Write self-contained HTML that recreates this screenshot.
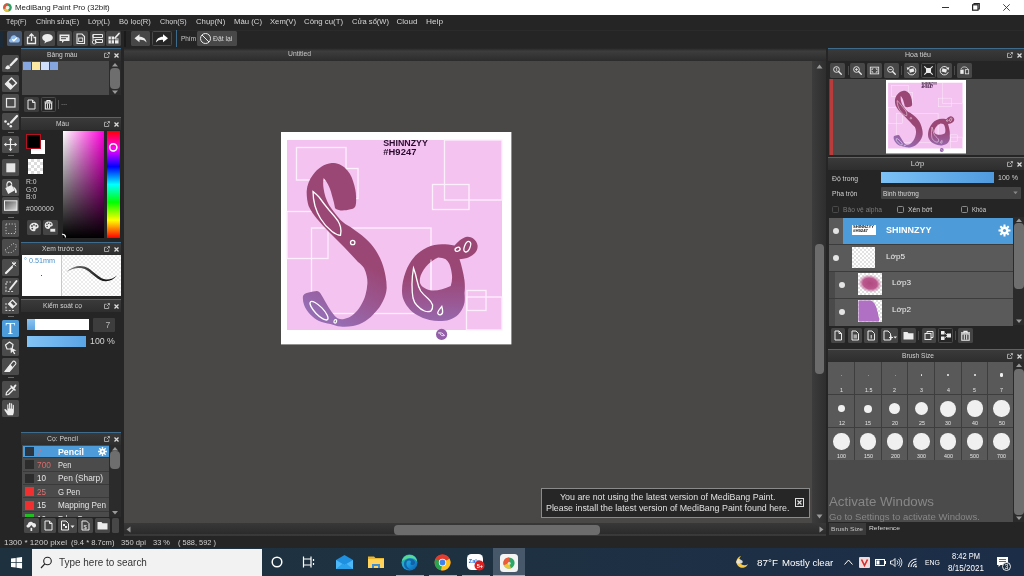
<!DOCTYPE html><html lang="vi"><head><meta charset="utf-8"><title>MediBang Paint Pro</title><style>
*{box-sizing:border-box;margin:0;padding:0}
html,body{width:1024px;height:576px;overflow:hidden;background:#4a4847;font-family:"Liberation Sans",sans-serif;}
#root{position:absolute;left:0;top:0;width:1024px;height:576px;overflow:hidden;will-change:transform}
.a{position:absolute}
.t{position:absolute;white-space:nowrap;line-height:1}
.hdr{position:absolute;height:13px;background:linear-gradient(#3b3a3a,#2e2e2e);border-top:1px solid #3f6c8c;color:#d8d8d8;font-size:8.5px;text-align:center;line-height:11px}
.btn{position:absolute;background:#4a4a4a;border-radius:1.5px}
.btnd{position:absolute;background:#262626;border:1px solid #4a4a4a;border-radius:1.5px}
.tool{position:absolute;left:2px;width:17px;height:17px;background:#4b4b4b;border-radius:1.5px}
svg{position:absolute;overflow:visible}
</style></head><body><div id="root">
<!-- sec_top -->
<div class="a" style="left:0;top:0;width:1024px;height:15px;background:#fff"></div>
<svg style="left:3px;top:3px" width="9" height="9" viewBox="0 0 9 9"><circle cx="4.500" cy="4.500" r="4.300" fill="#2e9e62"/><path d="M4.500 4.500L4.500 .200A4.300 4.300 0 0 0 .600 6.300Z" fill="#e8503a"/><path d="M4.500 4.500L.600 6.300A4.300 4.300 0 0 0 6 8.500Z" fill="#f0c030"/><circle cx="4.600" cy="4.600" r="1.900" fill="#fff" opacity=".85"/></svg>
<div class="t" style="left:15px;top:3.8px;font-size:7.9px;color:#1a1a1a;">MediBang Paint Pro (32bit)</div>
<div class="a" style="left:941.500px;top:7px;width:7px;height:1px;background:#333"></div>
<svg style="left:972px;top:3px" width="8" height="8" viewBox="0 0 8 8"><rect x=".600" y="1.800" width="5.400" height="5.400" fill="none" stroke="#222" stroke-width="1.200"/><path d="M2 1.800V.600H7.300V6H6" fill="none" stroke="#222" stroke-width="1.100"/></svg>
<svg style="left:1003px;top:4px" width="7" height="7" viewBox="0 0 7 7"><path d="M.300 .300L6.700 6.700M6.700 .300L.300 6.700" stroke="#333" stroke-width=".9"/></svg>
<div class="a" style="left:0;top:15px;width:1024px;height:33px;background:#252525"></div>
<div class="t" style="left:5.6px;top:18.3px;font-size:8px;color:#d6d6d6;transform:scaleX(0.850);transform-origin:0 0;">Tệp(F)</div>
<div class="t" style="left:35.6px;top:18.3px;font-size:8px;color:#d6d6d6;transform:scaleX(0.906);transform-origin:0 0;">Chỉnh sửa(E)</div>
<div class="t" style="left:87.5px;top:18.3px;font-size:8px;color:#d6d6d6;transform:scaleX(0.916);transform-origin:0 0;">Lớp(L)</div>
<div class="t" style="left:118.7px;top:18.3px;font-size:8px;color:#d6d6d6;transform:scaleX(0.954);transform-origin:0 0;">Bộ lọc(R)</div>
<div class="t" style="left:160px;top:18.3px;font-size:8px;color:#d6d6d6;transform:scaleX(0.896);transform-origin:0 0;">Chọn(S)</div>
<div class="t" style="left:195.7px;top:18.3px;font-size:8px;color:#d6d6d6;transform:scaleX(0.969);transform-origin:0 0;">Chụp(N)</div>
<div class="t" style="left:233.5px;top:18.3px;font-size:8px;color:#d6d6d6;transform:scaleX(0.969);transform-origin:0 0;">Màu (C)</div>
<div class="t" style="left:270px;top:18.3px;font-size:8px;color:#d6d6d6;transform:scaleX(0.959);transform-origin:0 0;">Xem(V)</div>
<div class="t" style="left:304px;top:18.3px;font-size:8px;color:#d6d6d6;transform:scaleX(0.975);transform-origin:0 0;">Công cụ(T)</div>
<div class="t" style="left:351.5px;top:18.3px;font-size:8px;color:#d6d6d6;transform:scaleX(0.946);transform-origin:0 0;">Cửa sổ(W)</div>
<div class="t" style="left:396.5px;top:18.3px;font-size:8px;color:#d6d6d6;">Cloud</div>
<div class="t" style="left:426px;top:18.3px;font-size:8px;color:#d6d6d6;transform:scaleX(1.033);transform-origin:0 0;">Help</div>
<div class="a" style="left:0;top:30px;width:1024px;height:1px;background:#2b2b2b"></div>
<div class="a" style="left:0;top:31px;width:3px;height:16px;background:#1c2a38"></div>
<div class="btn" style="left:7px;top:31px;width:15px;height:15px;background:#46566f"></div>
<div class="btn" style="left:24px;top:31px;width:15px;height:15px;background:#474747"></div>
<div class="btn" style="left:40px;top:31px;width:15px;height:15px;background:#474747"></div>
<div class="btn" style="left:57px;top:31px;width:15px;height:15px;background:#474747"></div>
<div class="btn" style="left:73px;top:31px;width:15px;height:15px;background:#474747"></div>
<div class="btn" style="left:90px;top:31px;width:15px;height:15px;background:#474747"></div>
<div class="btn" style="left:106px;top:31px;width:15px;height:15px;background:#474747"></div>
<svg style="left:7px;top:31px" width="15" height="15" viewBox="0 0 15 15"><path d="M4 11.500C1.800 11.500 1.200 8.300 3.500 7.700C3.500 4 8.300 3 9.700 6C12.800 5.300 14.300 10.500 11.300 11.500Z" fill="#8fbcec"/><path d="M5.300 8.300L6.800 9.800L9.800 6.800" fill="none" stroke="#fff" stroke-width="1.300"/></svg>
<svg style="left:24px;top:31px" width="15" height="15" viewBox="0 0 15 15"><path d="M5.500 6.500H3.500V12.500H11.500V6.500H9.500" fill="none" stroke="#ececec" stroke-width="1.300"/><path d="M7.500 10V3.500M5.300 5.300L7.500 3L9.700 5.300" fill="none" stroke="#ececec" stroke-width="1.300"/></svg>
<svg style="left:40px;top:31px" width="15" height="15" viewBox="0 0 15 15"><ellipse cx="7.500" cy="6.800" rx="5.300" ry="3.900" fill="#ececec"/><path d="M5 9.500L4.500 12.500L8 10Z" fill="#ececec"/></svg>
<svg style="left:57px;top:31px" width="15" height="15" viewBox="0 0 15 15"><path d="M2.500 3.500H12.500V10H7L5 12V10H2.500Z" fill="#ececec"/><path d="M4 5.700H11M4 7.700H9" stroke="#474747" stroke-width="1"/></svg>
<svg style="left:73px;top:31px" width="15" height="15" viewBox="0 0 15 15"><path d="M4 3H9L11.500 5.500V12.500H4Z" fill="none" stroke="#ececec" stroke-width="1.100"/><rect x="5.700" y="7" width="4" height="3.500" fill="none" stroke="#ececec" stroke-width=".9"/></svg>
<svg style="left:90px;top:31px" width="15" height="15" viewBox="0 0 15 15"><path d="M3 3.500H12.500V6.500H3ZM5.500 8.500H12.500V11.500H5.500ZM3 3.500V9" fill="none" stroke="#ececec" stroke-width="1"/><circle cx="4.300" cy="11" r="2" fill="none" stroke="#ececec" stroke-width=".9"/></svg>
<svg style="left:106px;top:31px" width="15" height="15" viewBox="0 0 15 15"><path d="M2.500 5.500H8V12.500H2.500Z" fill="#ececec"/><path d="M9 7.500H12.500V12.500H9Z" fill="#ececec"/><path d="M2.500 8.800H12.500M5.300 5.500V12.500" stroke="#474747" stroke-width=".8"/><path d="M13 2.500L9 7" stroke="#ececec" stroke-width="1.700" stroke-linecap="round"/></svg>
<div class="a" style="left:124px;top:31px;width:2px;height:16px;background:#1a1a1a"></div>
<div class="btn" style="left:131px;top:31px;width:19px;height:15px;background:#474747"></div>
<div class="btnd" style="left:152px;top:31px;width:20px;height:15px"></div>
<svg style="left:131px;top:31px" width="19" height="15" viewBox="0 0 19 15"><path d="M3.500 7.300L8.500 3.300V5.700C12.500 5.700 15.300 8 15.500 11.500C13.800 9.300 11.500 8.700 8.500 8.900V11.300Z" fill="#ececec"/></svg>
<svg style="left:152px;top:31px" width="20" height="15" viewBox="0 0 20 15"><path d="M16 7.300L11 3.300V5.700C7 5.700 4.200 8 4 11.500C5.700 9.300 8 8.700 11 8.900V11.300Z" fill="#fff"/></svg>
<div class="a" style="left:176px;top:30px;width:1px;height:17px;background:#3f6c8c"></div>
<div class="t" style="left:180.5px;top:35px;font-size:7px;color:#c8c8c8;transform:scaleX(0.918);transform-origin:0 0;">Phím</div>
<div class="btn" style="left:197px;top:31px;width:40px;height:15px;background:#484848"></div>
<svg style="left:199px;top:32px" width="13" height="13" viewBox="0 0 13 13"><circle cx="6.500" cy="6.500" r="5" fill="none" stroke="#ececec" stroke-width="1"/><path d="M3 3L10 10" stroke="#ececec" stroke-width="1"/></svg>
<div class="t" style="left:213px;top:35.5px;font-size:6.8px;color:#d8d8d8;">Đặt lại</div>
<div class="a" style="left:124px;top:48px;width:702px;height:13px;background:linear-gradient(#242424,#3d3d3d 25%,#2c2c2c)"></div>
<div class="t" style="left:288px;top:51px;font-size:6.6px;color:#c8c8c8;transform:scaleX(1.028);transform-origin:0 0;">Untitled</div>
<!-- sec_canvas -->
<div class="a" style="left:124px;top:61px;width:688px;height:462px;background:#4a4847"></div>
<svg style="left:0;top:0" width="1024" height="576" viewBox="0 0 1024 576"><defs><linearGradient id="ga" gradientUnits="userSpaceOnUse" x1="0" y1="278" x2="0" y2="326"><stop offset="0" stop-color="#9b4776"/><stop offset="0.45" stop-color="#9a5690"/><stop offset="1" stop-color="#966cb2"/></linearGradient><linearGradient id="sa" gradientUnits="userSpaceOnUse" x1="372" y1="268" x2="340" y2="324"><stop offset="0" stop-color="#9b4776"/><stop offset="0.5" stop-color="#9a5892"/><stop offset="1" stop-color="#966cb2"/></linearGradient></defs>
<rect x="281" y="132" width="230.4" height="212.4" fill="#fff"/>
<rect x="287" y="140" width="215" height="190" fill="#f4c2f0"/>
<g fill="#f9dcf8" fill-opacity=".06" stroke="#fdf0fd" stroke-width="1.3">
<rect x="296.5" y="147.5" width="49.5" height="32.5"/>
<rect x="346" y="168.5" width="12" height="30"/>
<rect x="287" y="211.5" width="41" height="47"/>
<rect x="311.5" y="228" width="119.5" height="85.5"/>
<rect x="444.5" y="140" width="57.5" height="60"/>
<rect x="432.5" y="184.5" width="36.5" height="25"/>
<rect x="467" y="290.5" width="19" height="20"/>
<rect x="466.5" y="297" width="35.5" height="33"/>
</g>
<path d="M331.7 163 C338 163 341.5 165 344.3 167.3 C349 171.5 351.5 176 353 181 C355 187 356 192 356 196 C356.3 200 356.3 203.5 355.5 206 C354.5 208.3 352.5 209 350.5 209.3 C347 210.3 343.5 210.6 340.5 210.4 C338 210 336 209.5 335 208 C334.3 204 333.5 200.5 332.4 197 C331.5 193.500 330.5 190 329.2 187 C327.800 183.500 326 180.500 323.6 178 C323 181.500 323 185 323.6 188.5 C324 191.500 324.6 194.300 325.5 197 C326.400 199.800 327.600 202.500 329 205 C330.500 207.500 332.200 209.800 334 212 C336 214.800 338.300 217.500 340.5 220 C343.500 223 347 225.300 350.5 227 C356 231 361 234.500 365.5 238.5 C369.500 242 372.800 246 375.5 250 C378 254 380.200 258 381.7 262 C383.500 266.500 384.700 271.300 385.5 276 C386.300 280 386.700 284 386.7 288 C386.500 292.500 385 297 383 301 C381 305 378.500 309 375.5 312 C372.500 315.500 369.200 318.700 365.5 321 C361.500 323.500 357.300 325.200 353 326 C349 326.800 344.500 327 340.5 326.6 C337 326.200 333.500 325.200 330.5 324 C326.500 323.300 322.500 322.500 319 321 C315.800 319.300 313 317.300 310.5 314.7 C307.700 311.800 305.300 308.500 304 304.7 C303 301.800 302.600 298.800 303 296 C303.800 294.300 305 293.500 306.7 293 C310 292 313.500 291.300 316.7 291 C318.300 291.300 319.600 292.200 320.5 293.5 C322.300 296.300 324 299.200 325.5 302 C327.500 305.500 329.500 309 331.7 312 C333.500 314.500 335.500 317 338 318.500 C340 319.300 342 319.500 344 319 C347.300 318.200 350.500 316.800 353 314.7 C356 312.200 358.500 309.300 360.5 306 C362.700 302.500 364.500 298.700 365.5 294.7 C366.500 291 367.200 287.300 367.4 283.5 C367.500 281 367.300 278.500 366.7 276 C366.200 273.200 365.300 270.500 364 268 C362.300 265.500 360.200 263.700 358 262 C353.500 257 348.700 252 344 247 C339 242 334 237 329 232 C324.500 227.500 320.500 223 316.7 218.5 C313.500 214.700 310.700 210.500 308.6 206 C307.200 201.200 306.500 196 306.7 191 C307 185.300 309.200 179.700 313 174.7 C317.500 168.500 324.500 163.500 331.7 163 Z" fill="url(#sa)"/>
<path d="M402 290.5 C402 284 403.500 277.500 405.7 271.7 C407.800 266 410.800 261 414.5 256.7 C418 252.700 422.300 249.500 427 247.400 C431.800 245.300 437 244.300 442 244.200 C446.300 244.200 450.500 244.700 454.5 245.500 C456 243.700 457.600 242 459.500 240.500 C461.700 238.700 464.300 237.300 467 236.700 C469.300 236.500 471.500 237.200 473.200 238.600 C475.500 240.300 477.200 242.700 477.600 245.500 C477.800 248.300 476.800 251 475 253 C472.800 255.300 470 257 467 258 C464.500 258.700 462 259.200 459.500 259.200 C460.500 262 461.300 265 462 268 C463 272 464 276.200 464.500 280.500 C465 285 465 289 464.500 293 C464.800 296.500 464.900 299.500 464.500 302.500 C463.800 306.300 462.300 309.700 460 312.500 C457.800 315.300 455.200 317.500 452 318.700 C448.800 320.200 445.400 320.900 442 321 C437.800 321.300 433.500 321 429.500 320 C425 319 420.800 317.300 417 315 C413.500 313 410.500 310.500 408.200 307.500 C406 304.800 404.300 301.800 403.200 298.700 C402.300 296 402 293.300 402 290.500 Z M438.200 257.400 C434.500 259 431.200 261.300 428.200 264.200 C425 267.300 422.300 271.200 420.700 275.500 C419.800 278 419.600 280.600 420 283 C420.800 285.200 422.300 287 424.500 288 C426.800 289.500 429.400 290.300 432 290.500 C435.300 290.700 438.700 290.200 442 289.200 C445 288.400 448 287.400 450.700 286 C451.800 282.600 452.300 279 452 275.500 C451.700 271.600 450.800 267.800 449.500 264.200 C448.600 262.300 447.300 260.600 445.700 259.200 C443.300 258.200 440.800 257.500 438.200 257.400 Z" fill="url(#ga)" fill-rule="evenodd"/>
<path d="M431 259.500V290" stroke="#fdeefd" stroke-width="1" fill="none" opacity=".9"/>
<g fill="none" stroke="#fff" stroke-width="1.3">
<path d="M313 191.600 C313 196.500 313.800 201.500 315 206 C316.300 210.500 318.300 214.800 320.500 218.500 C323.500 223.500 327.500 228 332 231.500 C335 233.800 338 235.200 340.500 235.400 C341.200 232.800 341.200 230 340.500 227 C339.900 224.700 339 222.700 338 221 C335.300 217.200 332.200 213.600 329 210 C325.500 205.800 322.200 201.500 319 197 C316.800 194.800 314.700 193 313 191.600 Z"/>
<circle cx="352.700" cy="242.500" r="2.200"/>
<ellipse cx="319" cy="310.700" rx="12.300" ry="4" transform="rotate(46 319 310.700)"/>
<ellipse cx="335.300" cy="321.300" rx="1.300" ry="1.800" transform="rotate(20 335.300 321.300)" stroke-width="1.2"/>
<path d="M413.500 268 C412.500 273.500 412 279 412 284.200 C412 289 412.300 294 413 298 C414 302 415.300 304 417 305.500 C419.300 308 421.800 310 424.500 311 C426.600 311.800 428.800 311.900 430.700 311.200 C432.300 309.500 432.900 307.300 432.600 305 C431.800 302.600 430.300 300.500 428.200 298.700 C425.500 296.400 422.800 294 420.700 291 C419 288 417.800 284.500 417 280.500 C416.200 276.200 415 272 413.500 268 Z"/>
<ellipse cx="467.300" cy="246.700" rx="2.800" ry="5.500" transform="rotate(22 467.300 246.700)"/>
<ellipse cx="457.600" cy="249.300" rx="2.600" ry="1.900" transform="rotate(-25 457.600 249.300)"/>
<path d="M441.800 306.500 C440.200 308.500 438.300 310.500 437.800 312.300 C437.600 314 438.800 315 440.300 314.800 C442 314.500 442.800 313 442.600 311 C442.500 309.500 442.200 308 441.800 306.500 Z"/>
</g>
<circle cx="441.600" cy="334.400" r="5.600" fill="#925fa8"/>
<path d="M438 333 C440.500 332.300 443 333 444.500 335.500 C442.500 336.300 440.500 335.300 439.800 333.200" fill="none" stroke="#fff" stroke-width=".8"/>
<text transform="translate(383.200 145.800) scale(.94 1)" font-family="'Liberation Sans',sans-serif" font-weight="bold" font-size="9.400" fill="#2a0b2e">SHINNZYY</text>
<text x="383.200" y="154.800" font-family="'Liberation Sans',sans-serif" font-weight="bold" font-size="9.400" fill="#2a0b2e" letter-spacing=".1">#H9247</text></svg>
<!-- sec_left -->
<div class="a" style="left:0;top:48px;width:21px;height:488px;background:#252525"></div>
<div class="tool" style="top:55px"></div>
<svg style="left:2px;top:55px" width="17" height="17" viewBox="0 0 17 17"><path d="M14.700 3.900L8.600 10.200" stroke="#ececec" stroke-width="2.300" stroke-linecap="round"/><path d="M3.300 13.800C3.300 12.200 4.500 10.300 6.300 10.300L8.300 12.300C8.300 14 6 14.800 3.300 13.800Z" fill="#ececec"/></svg>
<div class="tool" style="top:75px"></div>
<svg style="left:2px;top:75px" width="17" height="17" viewBox="0 0 17 17"><path d="M9.500 3L14.500 8L8.500 14L3.500 9Z" fill="none" stroke="#ececec" stroke-width="1.500" stroke-linejoin="round"/><path d="M6.300 6.400L11.200 11.300L8.500 14L3.500 9Z" fill="#ececec"/></svg>
<div class="tool" style="top:94px"></div>
<svg style="left:2px;top:94px" width="17" height="17" viewBox="0 0 17 17"><rect x="4.500" y="4.500" width="8.500" height="8.500" fill="none" stroke="#ececec" stroke-width="1.200"/></svg>
<div class="tool" style="top:113px"></div>
<svg style="left:2px;top:113px" width="17" height="17" viewBox="0 0 17 17"><path d="M15 3L9 9.500" stroke="#ececec" stroke-width="2.200" stroke-linecap="round"/><circle cx="3.500" cy="8.500" r="1.300" fill="#ececec"/><circle cx="6.300" cy="11" r="1.300" fill="#ececec"/><circle cx="8.800" cy="13.200" r="1.300" fill="#ececec"/></svg>
<div class="tool" style="top:136px"></div>
<svg style="left:2px;top:136px" width="17" height="17" viewBox="0 0 17 17"><path d="M8.500 3V14M3 8.500H14" stroke="#ececec" stroke-width="1.200"/><path d="M8.500 1.800L10.500 4.300H6.500ZM8.500 15.200L10.500 12.700H6.500ZM1.800 8.500L4.300 6.500V10.500ZM15.200 8.500L12.700 6.500V10.500Z" fill="#ececec"/></svg>
<div class="tool" style="top:159px"></div>
<svg style="left:2px;top:159px" width="17" height="17" viewBox="0 0 17 17"><rect x="4.300" y="4.300" width="9" height="9" fill="#e4e4e4"/></svg>
<div class="tool" style="top:178.5px"></div>
<svg style="left:2px;top:178.5px" width="17" height="17" viewBox="0 0 17 17"><path d="M3.300 9L9.800 5.800L12.600 11.600L6.200 14.900Z" fill="#ececec"/><path d="M5.200 8C4.300 5 5.300 2.800 7 2.600C8.700 2.500 9.600 4 9.800 5.800" fill="none" stroke="#ececec" stroke-width="1.100"/><path d="M11.300 7.500C13.300 8.500 14.800 10.500 14.800 13C14.800 14.300 13 14.300 13 13C13 11.500 12.500 10.300 11.500 9.500Z" fill="#ececec"/></svg>
<div class="tool" style="top:197px"></div>
<svg style="left:2px;top:197px" width="17" height="17" viewBox="0 0 17 17"><defs><linearGradient id="tg" x1="0" y1="0" x2="1" y2="1"><stop offset="0" stop-color="#555"/><stop offset="1" stop-color="#ddd"/></linearGradient></defs><rect x="2.500" y="3.800" width="12.500" height="9.500" fill="url(#tg)" stroke="#ececec" stroke-width="1"/></svg>
<div class="tool" style="top:220px"></div>
<svg style="left:2px;top:220px" width="17" height="17" viewBox="0 0 17 17"><rect x="4" y="4" width="9.500" height="9.500" fill="none" stroke="#c4c4c4" stroke-width="1" stroke-dasharray="1.200 1.600"/></svg>
<div class="tool" style="top:239px"></div>
<svg style="left:2px;top:239px" width="17" height="17" viewBox="0 0 17 17"><path d="M3 11L7.500 7.500L11 4.500L14.500 6L13.500 10.500L9.500 13.500L5 13.800Z" fill="none" stroke="#c4c4c4" stroke-width="1" stroke-dasharray="1.100 1.500"/></svg>
<div class="tool" style="top:259px"></div>
<svg style="left:2px;top:259px" width="17" height="17" viewBox="0 0 17 17"><path d="M4 14L10 8" stroke="#ececec" stroke-width="2.200" stroke-linecap="round"/><path d="M12 2.500V6.500M10 4.500H14M9.800 2.800L14.200 7.200M14.200 2.800L9.800 7.200" stroke="#ececec" stroke-width=".8"/></svg>
<div class="tool" style="top:278px"></div>
<svg style="left:2px;top:278px" width="17" height="17" viewBox="0 0 17 17"><path d="M4 5V13.500H12" fill="none" stroke="#d0d0d0" stroke-width="1.100" stroke-dasharray="2 1.400"/><path d="M4 4H9" stroke="#d0d0d0" stroke-width="1.100" stroke-dasharray="2 1.400"/><path d="M14.500 3L8.500 10.500" stroke="#ececec" stroke-width="2" stroke-linecap="round"/><path d="M7 12.500L7.800 10.300L9.200 11.500Z" fill="#ececec"/></svg>
<div class="tool" style="top:297px"></div>
<svg style="left:2px;top:297px" width="17" height="17" viewBox="0 0 17 17"><path d="M4 6V13.500H12" fill="none" stroke="#d0d0d0" stroke-width="1.100" stroke-dasharray="2 1.400"/><path d="M10.500 3L14.500 7L10.500 11L6.500 7Z" fill="none" stroke="#ececec" stroke-width="1.200"/><path d="M8.300 5.200L12.300 9.200L10.500 11L6.500 7Z" fill="#ececec"/></svg>
<div class="tool" style="top:320px;background:#4d9bd9"></div>
<div class="t" style="left:5.500px;top:321px;font-family:'Liberation Serif',serif;font-size:16px;color:#fff">T</div>
<div class="tool" style="top:339px"></div>
<svg style="left:2px;top:339px" width="17" height="17" viewBox="0 0 17 17"><path d="M3.500 6L7.500 3L11 5.500L10 10H5Z" fill="none" stroke="#ececec" stroke-width="1.200" stroke-linejoin="round"/><path d="M8.500 8.500L14.500 11.500L11.800 12L13.300 14.800L12 15.300L10.700 12.500L8.800 14.300Z" fill="#ececec"/></svg>
<div class="tool" style="top:358px"></div>
<svg style="left:2px;top:358px" width="17" height="17" viewBox="0 0 17 17"><path d="M11 3.300C12.500 2.500 14.500 4.500 13.700 6L7.500 13.500H2.800Z" fill="none" stroke="#ececec" stroke-width="1.100" stroke-linejoin="round"/><path d="M8.200 6.200L11 9.300L7.500 13.500H2.800Z" fill="#ececec"/></svg>
<div class="tool" style="top:381px"></div>
<svg style="left:2px;top:381px" width="17" height="17" viewBox="0 0 17 17"><path d="M4 14L4.500 11.500L9.500 6.500L11.500 8.500L6.500 13.500Z" fill="none" stroke="#ececec" stroke-width="1.200" stroke-linejoin="round"/><path d="M9 5L13 9" stroke="#ececec" stroke-width="1.600" stroke-linecap="round"/><path d="M11 6.500C12 4.500 13 3.200 14 3.500C15 4 14 5.500 12.500 7.500Z" fill="#ececec"/></svg>
<div class="tool" style="top:400px"></div>
<svg style="left:2px;top:400px" width="17" height="17" viewBox="0 0 17 17"><path d="M5.800 15.200C4.300 13 2.800 11 2.300 9.800C2.500 8.800 3.600 8.800 4.300 9.700L5.300 11V5C5.300 4 6.500 4 6.600 5V8.500H7V3.600C7.100 2.600 8.300 2.600 8.400 3.600V8.500H8.800V4C8.900 3 10.100 3 10.200 4V8.700H10.600V5.300C10.700 4.400 11.800 4.400 11.900 5.300V11.500C11.900 13 11.400 14.300 10.900 15.200Z" fill="#ececec"/><path d="M6.800 5V8.500M8.600 4V8.500M10.400 5V8.700" stroke="#4b4b4b" stroke-width=".45"/></svg>
<div class="a" style="left:8px;top:132px;width:6px;height:1px;background:#6a6a6a"></div>
<div class="a" style="left:8px;top:155px;width:6px;height:1px;background:#6a6a6a"></div>
<div class="a" style="left:8px;top:217px;width:6px;height:1px;background:#6a6a6a"></div>
<div class="a" style="left:8px;top:316px;width:6px;height:1px;background:#6a6a6a"></div>
<div class="a" style="left:8px;top:377px;width:6px;height:1px;background:#6a6a6a"></div>
<div class="a" style="left:21px;top:48px;width:103px;height:488px;background:#252525"></div>
<div class="hdr" style="left:21px;top:48px;width:100px;height:13px"></div><div class="t" style="left:47.2px;top:51.2px;font-size:7.6px;color:#d2d2d2;transform:scaleX(0.880);transform-origin:0 0;">Bảng màu</div><svg style="left:104px;top:52px" width="6" height="6" viewBox="0 0 7 7"><path d="M3 1.500H.600V6.400H5.500V4" fill="none" stroke="#b8b8b8" stroke-width="1"/><path d="M3.300 3.700L6.300 .700M4.300 .600H6.400V2.700" fill="none" stroke="#b8b8b8" stroke-width="1"/></svg><svg style="left:113.5px;top:52.5px" width="5" height="5" viewBox="0 0 6 6"><path d="M.600 .600L5.400 5.400M5.400 .600L.600 5.400" stroke="#dcdcdc" stroke-width="1.500"/></svg>
<div class="a" style="left:22px;top:61px;width:87px;height:34px;background:#4a4a4a"></div>
<div class="a" style="left:23px;top:62px;width:8px;height:8px;background:#86a6df"></div>
<div class="a" style="left:32px;top:62px;width:8px;height:8px;background:#fbe9a3"></div>
<div class="a" style="left:41px;top:62px;width:8px;height:8px;background:#cfdffb"></div>
<div class="a" style="left:50px;top:62px;width:8px;height:8px;background:#86a6df"></div>
<div class="a" style="left:109px;top:61px;width:12px;height:34px;background:#2b2b2b"></div>
<div class="a" style="left:110px;top:68px;width:10px;height:21px;background:#6e6e6e;border-radius:4px"></div>
<svg style="left:111px;top:62px" width="8" height="34" viewBox="0 0 8 34"><path d="M4 1L7 4.500H1Z" fill="#9a9a9a"/><path d="M4 32L7 28.500H1Z" fill="#9a9a9a"/></svg>
<div class="btn" style="left:24px;top:97px;width:15px;height:15px;background:#3c3c3c"></div>
<svg style="left:24px;top:97px" width="15" height="15" viewBox="0 0 15 15"><path d="M4 3H8.500L11 5.500V12H4Z M8.500 3V5.500H11" fill="none" stroke="#e8e8e8" stroke-width="1"/></svg>
<div class="btnd" style="left:41px;top:97px;width:15px;height:15px"></div>
<svg style="left:41px;top:97px" width="15" height="15" viewBox="0 0 15 15"><path d="M3.500 5H11.500M6 5V3.500H9V5" fill="none" stroke="#f0f0f0" stroke-width="1.200"/><path d="M4.300 6H10.700V12H4.300Z" fill="none" stroke="#f0f0f0" stroke-width="1.100"/><path d="M6.400 6.500V11.500M8.600 6.500V11.500" stroke="#f0f0f0" stroke-width="1"/></svg>
<div class="a" style="left:58px;top:100px;width:1px;height:9px;background:#555"></div>
<div class="t" style="left:61px;top:100px;font-size:7px;color:#777;letter-spacing:-.3px">---</div>
<div class="hdr" style="left:21px;top:117px;width:100px;height:13px"></div><div class="t" style="left:56px;top:120.2px;font-size:7.6px;color:#d2d2d2;transform:scaleX(0.879);transform-origin:0 0;">Màu</div><svg style="left:104px;top:121px" width="6" height="6" viewBox="0 0 7 7"><path d="M3 1.500H.600V6.400H5.500V4" fill="none" stroke="#b8b8b8" stroke-width="1"/><path d="M3.300 3.700L6.300 .700M4.300 .600H6.400V2.700" fill="none" stroke="#b8b8b8" stroke-width="1"/></svg><svg style="left:113.5px;top:121.5px" width="5" height="5" viewBox="0 0 6 6"><path d="M.600 .600L5.400 5.400M5.400 .600L.600 5.400" stroke="#dcdcdc" stroke-width="1.500"/></svg>
<div class="a" style="left:31px;top:140px;width:14px;height:14px;background:#fff"></div>
<div class="a" style="left:26px;top:134px;width:14.500px;height:15px;background:#000;border:1.500px solid #b8101e"></div>
<div class="a" style="left:28px;top:158.500px;width:15px;height:15.500px;background-color:#fff;background-image:linear-gradient(45deg,#dcdcdc 25%,transparent 25%,transparent 75%,#dcdcdc 75%),linear-gradient(45deg,#dcdcdc 25%,transparent 25%,transparent 75%,#dcdcdc 75%);background-size:6px 6px;background-position:0 0,3px 3px"></div>
<div class="t" style="left:26px;top:179px;font-size:6.800px;color:#d0d0d0">R:0</div>
<div class="t" style="left:26px;top:186.5px;font-size:6.800px;color:#d0d0d0">G:0</div>
<div class="t" style="left:26px;top:194px;font-size:6.800px;color:#d0d0d0">B:0</div>
<div class="t" style="left:26px;top:206px;font-size:6.800px;color:#d0d0d0;letter-spacing:.2px">#000000</div>
<div class="btn" style="left:27px;top:220px;width:14px;height:14.500px;background:#444"></div>
<div class="btn" style="left:43px;top:220px;width:14.500px;height:14.500px;background:#444"></div>
<svg style="left:27px;top:220px" width="14" height="14" viewBox="0 0 14 14"><path d="M7 2.800C10 2.800 12 4.800 11.600 7C11.300 8.600 9.800 8.200 9 8.800C8.200 9.500 9 10.800 7.500 11.200C5 11.700 2.500 9.800 2.500 7C2.500 4.500 4.500 2.800 7 2.800Z" fill="#e8e8e8"/><circle cx="5" cy="6" r=".9" fill="#444"/><circle cx="7" cy="4.800" r=".9" fill="#444"/><circle cx="9.300" cy="5.800" r=".9" fill="#444"/><circle cx="5.300" cy="8.600" r=".9" fill="#444"/></svg>
<svg style="left:43px;top:220px" width="14" height="14" viewBox="0 0 14 14"><g transform="translate(-.500 -1) scale(.88)"><path d="M7 2.800C10 2.800 12 4.800 11.600 7C11.300 8.600 9.800 8.200 9 8.800C8.200 9.500 9 10.800 7.500 11.200C5 11.700 2.500 9.800 2.500 7C2.500 4.500 4.500 2.800 7 2.800Z" fill="#e8e8e8"/><circle cx="5" cy="6" r=".9" fill="#444"/><circle cx="7" cy="4.800" r=".9" fill="#444"/><circle cx="9.300" cy="5.800" r=".9" fill="#444"/><circle cx="5.300" cy="8.600" r=".9" fill="#444"/></g><rect x="7" y="8.500" width="5.500" height="3.500" fill="#e8e8e8" stroke="#444" stroke-width=".6"/></svg>
<div class="a" style="left:62.500px;top:131px;width:41.500px;height:106.500px;background:linear-gradient(to top,#000,rgba(0,0,0,0)),linear-gradient(to right,#fff,#ff00dc)"></div>
<div class="a" style="left:107px;top:131px;width:13px;height:106.500px;background:linear-gradient(to bottom,#ff0000 0%,#ff0080 8%,#ff00ff 16.600%,#0000ff 33.300%,#00ffff 50%,#00ff00 66.600%,#ffff00 83.300%,#ff0000 100%)"></div>
<svg style="left:107px;top:141px" width="13" height="13" viewBox="0 0 13 13"><circle cx="6.300" cy="6.300" r="3.600" fill="none" stroke="#fff" stroke-width="1.500"/></svg>
<svg style="left:60px;top:232px" width="8" height="8" viewBox="0 0 8 8"><path d="M2 2.300A3 3 0 0 1 5.500 5.500" fill="none" stroke="#fff" stroke-width="1.200"/></svg>
<div class="hdr" style="left:21px;top:242px;width:100px;height:13px"></div><div class="t" style="left:42px;top:245.2px;font-size:7.6px;color:#d2d2d2;transform:scaleX(0.884);transform-origin:0 0;">Xem trước cọ</div><svg style="left:104px;top:246px" width="6" height="6" viewBox="0 0 7 7"><path d="M3 1.500H.600V6.400H5.500V4" fill="none" stroke="#b8b8b8" stroke-width="1"/><path d="M3.300 3.700L6.300 .700M4.300 .600H6.400V2.700" fill="none" stroke="#b8b8b8" stroke-width="1"/></svg><svg style="left:113.5px;top:246.5px" width="5" height="5" viewBox="0 0 6 6"><path d="M.600 .600L5.400 5.400M5.400 .600L.600 5.400" stroke="#dcdcdc" stroke-width="1.500"/></svg>
<div class="a" style="left:22px;top:255px;width:38.500px;height:41px;background:#fff"></div>
<div class="a" style="left:61px;top:255px;width:60px;height:41px;background-color:#fff;background-image:linear-gradient(45deg,#ececec 25%,transparent 25%,transparent 75%,#ececec 75%),linear-gradient(45deg,#ececec 25%,transparent 25%,transparent 75%,#ececec 75%);background-size:4px 4px;background-position:0 0,2px 2px"></div>
<div class="a" style="left:60.500px;top:255px;width:1px;height:41px;background:#c8c8c8"></div>
<div class="t" style="left:24px;top:257px;font-size:7px;color:#4a90c8;transform:scaleX(1.032);transform-origin:0 0;">° 0.51mm</div>
<div class="a" style="left:40.500px;top:274.500px;width:1px;height:1px;background:#555"></div>
<svg style="left:61px;top:255px" width="60" height="41" viewBox="0 0 60 41"><defs><linearGradient id="bs" x1="0" x2="1"><stop offset="0" stop-color="#888"/><stop offset=".5" stop-color="#333"/><stop offset="1" stop-color="#000"/></linearGradient></defs><path d="M5 17C13 10 21 9.500 27 13C34 17.500 39 24 45 24.500C49 24.800 53 23 56 20.500C53 24 49 26.500 44.500 26.300C37 26 32 19 25.500 15C20 12 13 12.500 5 17Z" fill="url(#bs)"/></svg>
<div class="hdr" style="left:21px;top:299px;width:100px;height:13px"></div><div class="t" style="left:43px;top:302.2px;font-size:7.6px;color:#d2d2d2;transform:scaleX(0.888);transform-origin:0 0;">Kiểm soát cọ</div><svg style="left:104px;top:303px" width="6" height="6" viewBox="0 0 7 7"><path d="M3 1.500H.600V6.400H5.500V4" fill="none" stroke="#b8b8b8" stroke-width="1"/><path d="M3.300 3.700L6.300 .700M4.300 .600H6.400V2.700" fill="none" stroke="#b8b8b8" stroke-width="1"/></svg><svg style="left:113.5px;top:303.5px" width="5" height="5" viewBox="0 0 6 6"><path d="M.600 .600L5.400 5.400M5.400 .600L.600 5.400" stroke="#dcdcdc" stroke-width="1.500"/></svg>
<div class="a" style="left:27px;top:319px;width:61.500px;height:10.500px;background:#fff"></div>
<div class="a" style="left:27px;top:319px;width:7.500px;height:10.500px;background:linear-gradient(#8cc4f0,#5ea6e2)"></div>
<div class="a" style="left:93px;top:318px;width:22px;height:13.500px;background:#3d3d3d;border-radius:1px"></div>
<div class="t" style="left:105.500px;top:321px;font-size:8.500px;color:#b8b8b8">7</div>
<div class="a" style="left:27px;top:336px;width:59px;height:10.500px;background:linear-gradient(to right,#84c4f6,#5aa4e4)"></div>
<div class="t" style="left:90px;top:336.500px;font-size:8.800px;color:#d4d4d4">100 %</div>
<div class="hdr" style="left:21px;top:432px;width:100px;height:13px"></div><div class="t" style="left:47px;top:435.2px;font-size:7.6px;color:#d2d2d2;transform:scaleX(0.895);transform-origin:0 0;">Cọ: Pencil</div><svg style="left:104px;top:436px" width="6" height="6" viewBox="0 0 7 7"><path d="M3 1.500H.600V6.400H5.500V4" fill="none" stroke="#b8b8b8" stroke-width="1"/><path d="M3.300 3.700L6.300 .700M4.300 .600H6.400V2.700" fill="none" stroke="#b8b8b8" stroke-width="1"/></svg><svg style="left:113.5px;top:436.5px" width="5" height="5" viewBox="0 0 6 6"><path d="M.600 .600L5.400 5.400M5.400 .600L.600 5.400" stroke="#dcdcdc" stroke-width="1.500"/></svg>
<div class="a" style="left:22px;top:445px;width:87px;height:71.500px;background:#4b4b4b;overflow:hidden">
<div class="a" style="left:1px;top:0.5px;width:86px;height:12.700px;background:#4d9bd9;border-bottom:1px solid #3a3a3a"></div>
<div class="a" style="left:3px;top:2.0px;width:8.500px;height:9px;background:#2c3540"></div>
<div class="t" style="left:15px;top:2.5px;font-size:9px;color:#e06a78;transform:scaleX(0.899);transform-origin:0 0;">7</div>
<div class="t" style="left:36px;top:2px;font-size:9.4px;color:#fff;font-weight:bold;transform:scaleX(0.939);transform-origin:0 0;">Pencil</div>
<div class="a" style="left:1px;top:13.9px;width:86px;height:12.700px;background:#4b4b4b;border-bottom:1px solid #3a3a3a"></div>
<div class="a" style="left:3px;top:15.4px;width:8.500px;height:9px;background:#2c2c2c"></div>
<div class="t" style="left:15px;top:15.9px;font-size:9px;color:#d86a6a;transform:scaleX(0.932);transform-origin:0 0;">700</div>
<div class="t" style="left:36px;top:15.9px;font-size:9px;color:#e4e4e4;transform:scaleX(0.843);transform-origin:0 0;">Pen</div>
<div class="a" style="left:1px;top:27.3px;width:86px;height:12.700px;background:#4b4b4b;border-bottom:1px solid #3a3a3a"></div>
<div class="a" style="left:3px;top:28.8px;width:8.500px;height:9px;background:#2c2c2c"></div>
<div class="t" style="left:15px;top:29.3px;font-size:9px;color:#e8e8e8;transform:scaleX(0.899);transform-origin:0 0;">10</div>
<div class="t" style="left:36px;top:29.3px;font-size:9px;color:#e4e4e4;transform:scaleX(0.927);transform-origin:0 0;">Pen (Sharp)</div>
<div class="a" style="left:1px;top:40.7px;width:86px;height:12.700px;background:#4b4b4b;border-bottom:1px solid #3a3a3a"></div>
<div class="a" style="left:3px;top:42.2px;width:8.500px;height:9px;background:#f03030"></div>
<div class="t" style="left:15px;top:42.7px;font-size:9px;color:#e07070;transform:scaleX(0.899);transform-origin:0 0;">25</div>
<div class="t" style="left:36px;top:42.7px;font-size:9px;color:#e4e4e4;transform:scaleX(0.862);transform-origin:0 0;">G Pen</div>
<div class="a" style="left:1px;top:54.1px;width:86px;height:12.700px;background:#4b4b4b;border-bottom:1px solid #3a3a3a"></div>
<div class="a" style="left:3px;top:55.6px;width:8.500px;height:9px;background:#f03030"></div>
<div class="t" style="left:15px;top:56.1px;font-size:9px;color:#e8e8e8;transform:scaleX(0.899);transform-origin:0 0;">15</div>
<div class="t" style="left:36px;top:56.1px;font-size:9px;color:#e4e4e4;transform:scaleX(0.905);transform-origin:0 0;">Mapping Pen</div>
<div class="a" style="left:1px;top:67.5px;width:86px;height:12.700px;background:#4b4b4b;border-bottom:1px solid #3a3a3a"></div>
<div class="a" style="left:3px;top:69.0px;width:8.500px;height:9px;background:#20c020"></div>
<div class="t" style="left:15px;top:69.5px;font-size:9px;color:#e8e8e8;transform:scaleX(0.899);transform-origin:0 0;">10</div>
<div class="t" style="left:36px;top:69.5px;font-size:9px;color:#e4e4e4;transform:scaleX(0.835);transform-origin:0 0;">Edge Pen</div>
</div>
<svg style="left:98px;top:447px" width="9" height="9" viewBox="0 0 9 9"><circle cx="4.500" cy="4.500" r="2.700" fill="#fff"/><path d="M4.500 0V9M0 4.500H9M1.300 1.300L7.700 7.700M7.700 1.300L1.300 7.700" stroke="#fff" stroke-width="1.400"/><circle cx="4.500" cy="4.500" r="1" fill="#4d9bd9"/></svg>
<div class="a" style="left:109px;top:445px;width:12px;height:72px;background:#2b2b2b"></div>
<div class="a" style="left:110px;top:451px;width:10px;height:17.500px;background:#6e6e6e;border-radius:4px"></div>
<svg style="left:111px;top:446px" width="8" height="70" viewBox="0 0 8 70"><path d="M4 1L7 4.500H1Z" fill="#9a9a9a"/><path d="M4 68.500L7 65H1Z" fill="#9a9a9a"/></svg>
<div class="btn" style="left:24px;top:518px;width:14.5px;height:14.500px;background:#474747"></div>
<div class="btn" style="left:41px;top:518px;width:14.5px;height:14.500px;background:#474747"></div>
<div class="btn" style="left:58px;top:518px;width:18.5px;height:14.500px;background:#474747"></div>
<div class="btn" style="left:78px;top:518px;width:14.5px;height:14.500px;background:#474747"></div>
<div class="btn" style="left:95px;top:518px;width:14.5px;height:14.500px;background:#474747"></div>
<div class="btn" style="left:112px;top:518px;width:6.5px;height:14.500px;background:#474747"></div>
<svg style="left:24px;top:518px" width="15" height="15" viewBox="0 0 15 15"><path d="M4 9.500C2.300 9.500 1.800 7 3.800 6.500C3.800 3.500 8 2.500 9.200 5.200C11.800 4.500 13.300 8.500 10.800 9.500Z" fill="#ececec"/><path d="M7.300 13V8.500M5.300 10.300L7.300 8L9.300 10.300" fill="none" stroke="#474747" stroke-width="1.200"/><path d="M6.500 13H8.200V9.800H6.500Z" fill="#ececec"/></svg>
<svg style="left:41px;top:518px" width="15" height="15" viewBox="0 0 15 15"><path d="M4 3H8.500L11 5.500V12H4Z M8.500 3V5.500H11" fill="none" stroke="#ececec" stroke-width="1"/></svg>
<svg style="left:58px;top:518px" width="19" height="15" viewBox="0 0 19 15"><path d="M3.500 3H8L10.500 5.500V12H3.500Z" fill="none" stroke="#ececec" stroke-width="1"/><rect x="5" y="6" width="2" height="2" fill="#ececec"/><rect x="7" y="8" width="2" height="2" fill="#ececec"/><path d="M12.500 7.500H16.500L14.500 10Z" fill="#ececec"/></svg>
<svg style="left:78px;top:518px" width="15" height="15" viewBox="0 0 15 15"><path d="M4 3H8.500L11 5.500V12H4Z" fill="none" stroke="#ececec" stroke-width="1"/><text x="5.600" y="10.800" font-size="6" font-family="'Liberation Sans',sans-serif" fill="#ececec">$</text></svg>
<svg style="left:95px;top:518px" width="15" height="15" viewBox="0 0 15 15"><path d="M2.500 4H6.500L7.500 5.300H12.500V11.500H2.500Z" fill="#ececec"/></svg>
<!-- sec_right -->
<div class="a" style="left:812px;top:61px;width:14px;height:462px;background:linear-gradient(to right,#3c3c3c,#2e2e2e)"></div>
<svg style="left:816px;top:64px" width="7" height="5" viewBox="0 0 7 5"><path d="M3.500 .500L6.500 4.500H.500Z" fill="#9a9a9a"/></svg>
<svg style="left:816px;top:514px" width="7" height="5" viewBox="0 0 7 5"><path d="M3.500 4.500L6.500 .500H.500Z" fill="#9a9a9a"/></svg>
<div class="a" style="left:815px;top:244px;width:9px;height:130px;background:#6c6c6c;border-radius:4px"></div>
<div class="a" style="left:826px;top:48px;width:198px;height:488px;background:#252525"></div>
<div class="hdr" style="left:828px;top:48px;width:196px;height:13px"></div><div class="t" style="left:904.5px;top:51.2px;font-size:7.6px;color:#d2d2d2;transform:scaleX(0.919);transform-origin:0 0;">Hoa tiêu</div><svg style="left:1007px;top:52px" width="6" height="6" viewBox="0 0 7 7"><path d="M3 1.500H.600V6.400H5.500V4" fill="none" stroke="#b8b8b8" stroke-width="1"/><path d="M3.300 3.700L6.300 .700M4.300 .600H6.400V2.700" fill="none" stroke="#b8b8b8" stroke-width="1"/></svg><svg style="left:1016.5px;top:52.5px" width="5" height="5" viewBox="0 0 6 6"><path d="M.600 .600L5.400 5.400M5.400 .600L.600 5.400" stroke="#dcdcdc" stroke-width="1.500"/></svg>
<div class="btn" style="left:830px;top:63px;width:15px;height:14.500px;background:#484848"></div>
<div class="btn" style="left:850px;top:63px;width:15px;height:14.500px;background:#484848"></div>
<div class="btn" style="left:867px;top:63px;width:15px;height:14.500px;background:#484848"></div>
<div class="btn" style="left:884px;top:63px;width:15px;height:14.500px;background:#484848"></div>
<div class="btn" style="left:904px;top:63px;width:15px;height:14.500px;background:#484848"></div>
<div class="btnd" style="left:921px;top:63px;width:15px;height:14.500px"></div>
<div class="btn" style="left:937px;top:63px;width:15px;height:14.500px;background:#484848"></div>
<div class="btn" style="left:957px;top:63px;width:15px;height:14.500px;background:#484848"></div>
<div class="a" style="left:848px;top:66px;width:1px;height:9px;background:#4a4a4a"></div>
<div class="a" style="left:901px;top:66px;width:1px;height:9px;background:#4a4a4a"></div>
<div class="a" style="left:954px;top:66px;width:1px;height:9px;background:#4a4a4a"></div>
<svg style="left:830px;top:63px" width="15" height="15" viewBox="0 0 15 15"><g transform="translate(1.200 1.200) scale(.84)"><circle cx="6.300" cy="6.300" r="3.400" fill="none" stroke="#ececec" stroke-width="1.100"/><path d="M8.800 8.800L12 12" stroke="#ececec" stroke-width="1.600" stroke-linecap="round"/><path d="M5.600 5.300L6.500 4.600V8.200" fill="none" stroke="#ececec" stroke-width=".8"/></g></svg>
<svg style="left:850px;top:63px" width="15" height="15" viewBox="0 0 15 15"><g transform="translate(1.200 1.200) scale(.84)"><circle cx="6.300" cy="6.300" r="3.400" fill="none" stroke="#ececec" stroke-width="1.100"/><path d="M8.800 8.800L12 12" stroke="#ececec" stroke-width="1.600" stroke-linecap="round"/><path d="M4.600 6.300H8M6.300 4.600V8" stroke="#ececec" stroke-width=".9"/></g></svg>
<svg style="left:867px;top:63px" width="15" height="15" viewBox="0 0 15 15"><g transform="translate(1.200 1.200) scale(.84)"><rect x="2.500" y="3.500" width="10" height="8" fill="none" stroke="#ececec" stroke-width="1"/><path d="M4 5H6.500L4 7.500ZM11 5H8.500L11 7.500ZM4 10H6.500L4 7.500ZM11 10H8.500L11 7.500Z" fill="#ececec"/></g></svg>
<svg style="left:884px;top:63px" width="15" height="15" viewBox="0 0 15 15"><g transform="translate(1.200 1.200) scale(.84)"><circle cx="6.300" cy="6.300" r="3.400" fill="none" stroke="#ececec" stroke-width="1.100"/><path d="M8.800 8.800L12 12" stroke="#ececec" stroke-width="1.600" stroke-linecap="round"/><path d="M4.600 6.300H8" stroke="#ececec" stroke-width=".9"/></g></svg>
<svg style="left:904px;top:63px" width="15" height="15" viewBox="0 0 15 15"><g transform="translate(1.200 1.200) scale(.84)"><path d="M3.200 5.500A5 5 0 1 1 3 9.500" fill="none" stroke="#ececec" stroke-width="1.100"/><path d="M1.800 3.500L5.500 4.500L2.800 7.200Z" fill="#ececec"/><rect x="5" y="5.500" width="5.500" height="4" fill="#ececec" transform="rotate(-15 7.500 7.500)"/></g></svg>
<svg style="left:921px;top:63px" width="15" height="15" viewBox="0 0 15 15"><g transform="translate(1.200 1.200) scale(.84)"><rect x="4.500" y="4.500" width="6" height="6" fill="#ececec"/><path d="M2.500 2.500L5 5M12.500 2.500L10 5M2.500 12.500L5 10M12.500 12.500L10 10" stroke="#ececec" stroke-width="1.300"/></g></svg>
<svg style="left:937px;top:63px" width="15" height="15" viewBox="0 0 15 15"><g transform="translate(1.200 1.200) scale(.84)"><path d="M11.800 5.500A5 5 0 1 0 12 9.500" fill="none" stroke="#ececec" stroke-width="1.100"/><path d="M13.200 3.500L9.500 4.500L12.200 7.200Z" fill="#ececec"/><rect x="4.500" y="5.500" width="5.500" height="4" fill="#ececec" transform="rotate(15 7.500 7.500)"/></g></svg>
<svg style="left:957px;top:63px" width="15" height="15" viewBox="0 0 15 15"><g transform="translate(1.200 1.200) scale(.84)"><rect x="2.500" y="6.500" width="4" height="5" fill="#ececec"/><rect x="8.500" y="6.500" width="4" height="5" fill="none" stroke="#ececec" stroke-width=".9"/><path d="M3.500 5.500C4.500 2.500 10 2.500 11.500 5.500" fill="none" stroke="#ececec" stroke-width=".9"/></g></svg>
<div class="a" style="left:829px;top:79px;width:195px;height:75.500px;background:#4b4b4b"></div>
<div class="a" style="left:830px;top:79px;width:3px;height:75.500px;background:#b83c3c"></div>
<svg style="left:886px;top:80px" width="80" height="73.500" viewBox="281 132 230.400 212.400" preserveAspectRatio="none"><defs><linearGradient id="gb" gradientUnits="userSpaceOnUse" x1="0" y1="278" x2="0" y2="326"><stop offset="0" stop-color="#9b4776"/><stop offset="0.45" stop-color="#9a5690"/><stop offset="1" stop-color="#966cb2"/></linearGradient><linearGradient id="sb" gradientUnits="userSpaceOnUse" x1="372" y1="268" x2="340" y2="324"><stop offset="0" stop-color="#9b4776"/><stop offset="0.5" stop-color="#9a5892"/><stop offset="1" stop-color="#966cb2"/></linearGradient></defs>
<rect x="281" y="132" width="230.4" height="212.4" fill="#fff"/>
<rect x="287" y="140" width="215" height="190" fill="#f4c2f0"/>
<g fill="#f9dcf8" fill-opacity=".06" stroke="#fdf0fd" stroke-width="1.3">
<rect x="296.5" y="147.5" width="49.5" height="32.5"/>
<rect x="346" y="168.5" width="12" height="30"/>
<rect x="287" y="211.5" width="41" height="47"/>
<rect x="311.5" y="228" width="119.5" height="85.5"/>
<rect x="444.5" y="140" width="57.5" height="60"/>
<rect x="432.5" y="184.5" width="36.5" height="25"/>
<rect x="467" y="290.5" width="19" height="20"/>
<rect x="466.5" y="297" width="35.5" height="33"/>
</g>
<path d="M331.7 163 C338 163 341.5 165 344.3 167.3 C349 171.5 351.5 176 353 181 C355 187 356 192 356 196 C356.3 200 356.3 203.5 355.5 206 C354.5 208.3 352.5 209 350.5 209.3 C347 210.3 343.5 210.6 340.5 210.4 C338 210 336 209.5 335 208 C334.3 204 333.5 200.5 332.4 197 C331.5 193.500 330.5 190 329.2 187 C327.800 183.500 326 180.500 323.6 178 C323 181.500 323 185 323.6 188.5 C324 191.500 324.6 194.300 325.5 197 C326.400 199.800 327.600 202.500 329 205 C330.500 207.500 332.200 209.800 334 212 C336 214.800 338.300 217.500 340.5 220 C343.500 223 347 225.300 350.5 227 C356 231 361 234.500 365.5 238.5 C369.500 242 372.800 246 375.5 250 C378 254 380.200 258 381.7 262 C383.500 266.500 384.700 271.300 385.5 276 C386.300 280 386.700 284 386.7 288 C386.500 292.500 385 297 383 301 C381 305 378.500 309 375.5 312 C372.500 315.500 369.200 318.700 365.5 321 C361.500 323.500 357.300 325.200 353 326 C349 326.800 344.500 327 340.5 326.6 C337 326.200 333.500 325.200 330.5 324 C326.500 323.300 322.500 322.500 319 321 C315.800 319.300 313 317.300 310.5 314.7 C307.700 311.800 305.300 308.500 304 304.7 C303 301.800 302.600 298.800 303 296 C303.800 294.300 305 293.500 306.7 293 C310 292 313.500 291.300 316.7 291 C318.300 291.300 319.600 292.200 320.5 293.5 C322.300 296.300 324 299.200 325.5 302 C327.500 305.500 329.500 309 331.7 312 C333.500 314.500 335.500 317 338 318.500 C340 319.300 342 319.500 344 319 C347.300 318.200 350.500 316.800 353 314.7 C356 312.200 358.500 309.300 360.5 306 C362.700 302.500 364.500 298.700 365.5 294.7 C366.500 291 367.200 287.300 367.4 283.5 C367.500 281 367.300 278.500 366.7 276 C366.200 273.200 365.300 270.500 364 268 C362.300 265.500 360.200 263.700 358 262 C353.500 257 348.700 252 344 247 C339 242 334 237 329 232 C324.500 227.500 320.500 223 316.7 218.5 C313.500 214.700 310.700 210.500 308.6 206 C307.200 201.200 306.500 196 306.7 191 C307 185.300 309.200 179.700 313 174.7 C317.500 168.500 324.500 163.500 331.7 163 Z" fill="url(#sb)"/>
<path d="M402 290.5 C402 284 403.500 277.500 405.7 271.7 C407.800 266 410.800 261 414.5 256.7 C418 252.700 422.300 249.500 427 247.400 C431.800 245.300 437 244.300 442 244.200 C446.300 244.200 450.500 244.700 454.5 245.500 C456 243.700 457.600 242 459.500 240.500 C461.700 238.700 464.300 237.300 467 236.700 C469.300 236.500 471.500 237.200 473.200 238.600 C475.500 240.300 477.200 242.700 477.600 245.500 C477.800 248.300 476.800 251 475 253 C472.800 255.300 470 257 467 258 C464.500 258.700 462 259.200 459.500 259.200 C460.500 262 461.300 265 462 268 C463 272 464 276.200 464.500 280.500 C465 285 465 289 464.500 293 C464.800 296.500 464.900 299.500 464.500 302.500 C463.800 306.300 462.300 309.700 460 312.500 C457.800 315.300 455.200 317.500 452 318.700 C448.800 320.200 445.400 320.900 442 321 C437.800 321.300 433.500 321 429.500 320 C425 319 420.800 317.300 417 315 C413.500 313 410.500 310.500 408.200 307.500 C406 304.800 404.300 301.800 403.200 298.700 C402.300 296 402 293.300 402 290.500 Z M438.200 257.400 C434.500 259 431.200 261.300 428.200 264.200 C425 267.300 422.300 271.200 420.700 275.500 C419.800 278 419.600 280.600 420 283 C420.800 285.200 422.300 287 424.500 288 C426.800 289.500 429.400 290.300 432 290.500 C435.300 290.700 438.700 290.200 442 289.200 C445 288.400 448 287.400 450.700 286 C451.800 282.600 452.300 279 452 275.500 C451.700 271.600 450.800 267.800 449.500 264.200 C448.600 262.300 447.300 260.600 445.700 259.200 C443.300 258.200 440.800 257.500 438.200 257.400 Z" fill="url(#gb)" fill-rule="evenodd"/>
<path d="M431 259.500V290" stroke="#fdeefd" stroke-width="1" fill="none" opacity=".9"/>
<g fill="none" stroke="#fff" stroke-width="1.3">
<path d="M313 191.600 C313 196.500 313.800 201.500 315 206 C316.300 210.500 318.300 214.800 320.500 218.500 C323.500 223.500 327.500 228 332 231.500 C335 233.800 338 235.200 340.500 235.400 C341.200 232.800 341.200 230 340.500 227 C339.900 224.700 339 222.700 338 221 C335.300 217.200 332.200 213.600 329 210 C325.500 205.800 322.200 201.500 319 197 C316.800 194.800 314.700 193 313 191.600 Z"/>
<circle cx="352.700" cy="242.500" r="2.200"/>
<ellipse cx="319" cy="310.700" rx="12.300" ry="4" transform="rotate(46 319 310.700)"/>
<ellipse cx="335.300" cy="321.300" rx="1.300" ry="1.800" transform="rotate(20 335.300 321.300)" stroke-width="1.2"/>
<path d="M413.500 268 C412.500 273.500 412 279 412 284.200 C412 289 412.300 294 413 298 C414 302 415.300 304 417 305.500 C419.300 308 421.800 310 424.500 311 C426.600 311.800 428.800 311.900 430.700 311.200 C432.300 309.500 432.900 307.300 432.600 305 C431.800 302.600 430.300 300.500 428.200 298.700 C425.500 296.400 422.800 294 420.700 291 C419 288 417.800 284.500 417 280.500 C416.200 276.200 415 272 413.500 268 Z"/>
<ellipse cx="467.300" cy="246.700" rx="2.800" ry="5.500" transform="rotate(22 467.300 246.700)"/>
<ellipse cx="457.600" cy="249.300" rx="2.600" ry="1.900" transform="rotate(-25 457.600 249.300)"/>
<path d="M441.800 306.500 C440.200 308.500 438.300 310.500 437.800 312.300 C437.600 314 438.800 315 440.300 314.800 C442 314.500 442.800 313 442.600 311 C442.500 309.500 442.200 308 441.800 306.500 Z"/>
</g>
<circle cx="441.600" cy="334.400" r="5.600" fill="#925fa8"/>
<path d="M438 333 C440.500 332.300 443 333 444.500 335.500 C442.500 336.300 440.500 335.300 439.800 333.200" fill="none" stroke="#fff" stroke-width=".8"/>
<text transform="translate(383.200 145.800) scale(.94 1)" font-family="'Liberation Sans',sans-serif" font-weight="bold" font-size="9.400" fill="#2a0b2e">SHINNZYY</text>
<text x="383.200" y="154.800" font-family="'Liberation Sans',sans-serif" font-weight="bold" font-size="9.400" fill="#2a0b2e" letter-spacing=".1">#H9247</text></svg>
<div class="hdr" style="left:828px;top:157px;width:196px;height:13px"></div><div class="t" style="left:910.8px;top:160.2px;font-size:7.6px;color:#d2d2d2;">Lớp</div><svg style="left:1007px;top:161px" width="6" height="6" viewBox="0 0 7 7"><path d="M3 1.500H.600V6.400H5.500V4" fill="none" stroke="#b8b8b8" stroke-width="1"/><path d="M3.300 3.700L6.300 .700M4.300 .600H6.400V2.700" fill="none" stroke="#b8b8b8" stroke-width="1"/></svg><svg style="left:1016.5px;top:161.5px" width="5" height="5" viewBox="0 0 6 6"><path d="M.600 .600L5.400 5.400M5.400 .600L.600 5.400" stroke="#dcdcdc" stroke-width="1.500"/></svg>
<div class="t" style="left:831.8px;top:174.8px;font-size:7.2px;color:#d0d0d0;transform:scaleX(0.949);transform-origin:0 0;">Độ trong</div>
<div class="a" style="left:881px;top:172px;width:113px;height:10.500px;background:linear-gradient(to right,#7cc2f6,#4f9ade)"></div>
<div class="t" style="left:998px;top:175px;font-size:6.8px;color:#d0d0d0;transform:scaleX(1.037);transform-origin:0 0;">100 %</div>
<div class="t" style="left:831.8px;top:190.3px;font-size:7.2px;color:#d0d0d0;transform:scaleX(0.933);transform-origin:0 0;">Pha trộn</div>
<div class="a" style="left:881px;top:187px;width:140px;height:12px;background:#444;border-radius:1px"></div>
<div class="t" style="left:883.4px;top:190.3px;font-size:7px;color:#d8d8d8;transform:scaleX(0.915);transform-origin:0 0;">Bình thường</div>
<svg style="left:1013px;top:191px" width="5" height="4" viewBox="0 0 5 4"><path d="M.300 .500H4.700L2.500 3.300Z" fill="#888"/></svg>
<div class="a" style="left:832px;top:206px;width:6.500px;height:6.500px;border:1px solid #4a4a4a;border-radius:1.500px"></div>
<div class="t" style="left:842.5px;top:206.3px;font-size:7px;color:#7a7a7a;transform:scaleX(0.954);transform-origin:0 0;">Bảo vệ alpha</div>
<div class="a" style="left:897px;top:206px;width:6.500px;height:6.500px;border:1px solid #8a8a8a;border-radius:1.500px"></div>
<div class="t" style="left:907.5px;top:206.3px;font-size:7px;color:#d0d0d0;transform:scaleX(0.967);transform-origin:0 0;">Xén bớt</div>
<div class="a" style="left:961px;top:206px;width:6.500px;height:6.500px;border:1px solid #8a8a8a;border-radius:1.500px"></div>
<div class="t" style="left:971.5px;top:206.3px;font-size:7px;color:#d0d0d0;transform:scaleX(0.856);transform-origin:0 0;">Khóa</div>
<div class="a" style="left:829px;top:218px;width:184px;height:107.500px;background:#525252;overflow:hidden">
<div class="a" style="left:0;top:0;width:14px;height:26px;background:#5a5a5a"></div>
<div class="a" style="left:14px;top:0;width:170px;height:26px;background:#4d9bd9"></div>
<div class="a" style="left:23px;top:7px;width:24px;height:9.500px;background:#fff"></div>
<div class="t" style="left:24px;top:7.5px;font-size:3.6px;color:#111;font-weight:bold;transform:scaleX(1.154);transform-origin:0 0;">SHINNZYY</div>
<div class="t" style="left:24px;top:11.5px;font-size:3.6px;color:#111;font-weight:bold;transform:scaleX(1.190);transform-origin:0 0;">#H9247</div>
<div class="t" style="left:57px;top:8.2px;font-size:9px;color:#fff;font-weight:bold;">SHINNZYY</div>
<div class="a" style="left:0;top:26px;width:184px;height:1px;background:#3c3c3c"></div>
<div class="a" style="left:0;top:27px;width:184px;height:26px;background:#5a5a5a"></div>
<div class="a" style="left:23px;top:29px;width:23px;height:21px;background-color:#fff;background-image:linear-gradient(45deg,#e2e2e2 25%,transparent 25%,transparent 75%,#e2e2e2 75%),linear-gradient(45deg,#e2e2e2 25%,transparent 25%,transparent 75%,#e2e2e2 75%);background-size:4px 4px;background-position:0 0,2px 2px"></div>
<div class="t" style="left:57px;top:34.5px;font-size:8px;color:#f0f0f0;transform:scaleX(1.022);transform-origin:0 0;">Lớp5</div>
<div class="a" style="left:0;top:52.500px;width:184px;height:1px;background:#3c3c3c"></div>
<div class="a" style="left:0;top:53.500px;width:6px;height:54px;background:#4a4a4a"></div>
<div class="a" style="left:6px;top:53.500px;width:178px;height:26px;background:#5a5a5a"></div>
<div class="a" style="left:29px;top:55px;width:24px;height:22px;background-color:#fff;background-image:linear-gradient(45deg,#e2e2e2 25%,transparent 25%,transparent 75%,#e2e2e2 75%),linear-gradient(45deg,#e2e2e2 25%,transparent 25%,transparent 75%,#e2e2e2 75%);background-size:4px 4px;background-position:0 0,2px 2px"></div>
<svg style="left:29px;top:55px" width="24" height="22" viewBox="0 0 24 22"><defs><radialGradient id="l3"><stop offset="0" stop-color="#b04a80"/><stop offset=".6" stop-color="#b85088" stop-opacity=".95"/><stop offset="1" stop-color="#c878a8" stop-opacity="0"/></radialGradient></defs><ellipse cx="12" cy="10.500" rx="12" ry="9" fill="url(#l3)" transform="rotate(12 12 10.500)"/></svg>
<div class="t" style="left:63px;top:61px;font-size:8px;color:#f0f0f0;transform:scaleX(1.022);transform-origin:0 0;">Lớp3</div>
<div class="a" style="left:0;top:79.500px;width:184px;height:1px;background:#3c3c3c"></div>
<div class="a" style="left:6px;top:80.500px;width:178px;height:27px;background:#5a5a5a"></div>
<div class="a" style="left:29px;top:82px;width:24px;height:22px;background-color:#fff;background-image:linear-gradient(45deg,#e2e2e2 25%,transparent 25%,transparent 75%,#e2e2e2 75%),linear-gradient(45deg,#e2e2e2 25%,transparent 25%,transparent 75%,#e2e2e2 75%);background-size:4px 4px;background-position:0 0,2px 2px"></div>
<svg style="left:29px;top:82px" width="24" height="22" viewBox="0 0 24 22"><path d="M.500 .500H13C16 2 18.500 6 19 10C19.500 12 20.500 13 20 15C21 17 21.500 19 21 21.500H.500Z" fill="#b070c4"/></svg>
<div class="t" style="left:63px;top:88px;font-size:8px;color:#f0f0f0;transform:scaleX(1.022);transform-origin:0 0;">Lớp2</div>
<div class="a" style="left:4px;top:10px;width:6px;height:6px;border-radius:50%;background:#e4e4e4"></div>
<div class="a" style="left:4px;top:37px;width:6px;height:6px;border-radius:50%;background:#e4e4e4"></div>
<div class="a" style="left:10px;top:63.5px;width:6px;height:6px;border-radius:50%;background:#e4e4e4"></div>
<div class="a" style="left:10px;top:90.5px;width:6px;height:6px;border-radius:50%;background:#e4e4e4"></div>
</div>
<svg style="left:998px;top:224px" width="13" height="13" viewBox="0 0 13 13"><circle cx="6.500" cy="6.500" r="4" fill="#fff"/><path d="M6.500 .500V12.500M.500 6.500H12.500M2.300 2.300L10.700 10.700M10.700 2.300L2.300 10.700" stroke="#fff" stroke-width="2"/><circle cx="6.500" cy="6.500" r="1.600" fill="#4d9bd9"/></svg>
<div class="a" style="left:1013px;top:217px;width:11px;height:108px;background:#2b2b2b"></div>
<div class="a" style="left:1014px;top:223px;width:9.500px;height:66px;background:#6e6e6e;border-radius:4px"></div>
<svg style="left:1014.500px;top:218px" width="8" height="106" viewBox="0 0 8 106"><path d="M4 .500L7 4H1Z" fill="#9a9a9a"/><path d="M4 105L7 101.500H1Z" fill="#9a9a9a"/></svg>
<div class="btn" style="left:831px;top:328px;width:14px;height:14.500px;background:#454545"></div>
<div class="btn" style="left:848px;top:328px;width:14px;height:14.500px;background:#454545"></div>
<div class="btn" style="left:864px;top:328px;width:14px;height:14.500px;background:#454545"></div>
<div class="btn" style="left:881px;top:328px;width:17px;height:14.500px;background:#454545"></div>
<div class="btn" style="left:901px;top:328px;width:15px;height:14.500px;background:#454545"></div>
<div class="btn" style="left:922px;top:328px;width:14px;height:14.500px;background:#454545"></div>
<div class="btnd" style="left:938px;top:328px;width:15px;height:14.500px"></div>
<div class="btn" style="left:958px;top:328px;width:15px;height:14.500px;background:#454545"></div>
<div class="a" style="left:918px;top:331px;width:1px;height:9px;background:#4a4a4a"></div>
<div class="a" style="left:955px;top:331px;width:1px;height:9px;background:#4a4a4a"></div>
<svg style="left:831px;top:328px" width="14" height="15" viewBox="0 0 14 15"><path d="M4 3H8L10.500 5.500V12H4ZM8 3V5.500H10.500" fill="none" stroke="#ececec" stroke-width="1"/></svg>
<svg style="left:848px;top:328px" width="14" height="15" viewBox="0 0 14 15"><path d="M4 3H8L10.500 5.500V12H4Z" fill="none" stroke="#ececec" stroke-width="1"/><rect x="5.500" y="6.500" width="3.500" height="4" fill="#aaa"/></svg>
<svg style="left:864px;top:328px" width="14" height="15" viewBox="0 0 14 15"><path d="M4 3H8L10.500 5.500V12H4Z" fill="none" stroke="#ececec" stroke-width="1"/><path d="M7.200 7V10.500" stroke="#ececec" stroke-width="1"/></svg>
<svg style="left:881px;top:328px" width="17" height="15" viewBox="0 0 17 15"><path d="M3 3H7L9.500 5.500V12H3Z" fill="none" stroke="#ececec" stroke-width="1"/><path d="M8 9.500H12M10 7.500V11.500" stroke="#ececec" stroke-width="1.100"/><path d="M12.500 8.500H16L14.200 10.500Z" fill="#ececec"/></svg>
<svg style="left:901px;top:328px" width="15" height="15" viewBox="0 0 15 15"><path d="M2.500 4H6.500L7.500 5.300H12.500V11.500H2.500Z" fill="#ececec"/></svg>
<svg style="left:922px;top:328px" width="14" height="15" viewBox="0 0 14 15"><rect x="3" y="5.500" width="6" height="6" fill="none" stroke="#ececec" stroke-width="1"/><path d="M5 5.500V3.500H11V9.500H9" fill="none" stroke="#ececec" stroke-width="1"/></svg>
<svg style="left:938px;top:328px" width="15" height="15" viewBox="0 0 15 15"><rect x="3" y="3" width="3.500" height="3.500" fill="#ececec"/><rect x="3" y="8.500" width="3.500" height="3.500" fill="#ececec"/><rect x="9" y="5.500" width="4" height="4" fill="#ececec"/><path d="M6.500 4.800L9 7M6.500 10.200L9 8" stroke="#ececec" stroke-width=".8"/></svg>
<svg style="left:958px;top:328px" width="15" height="15" viewBox="0 0 15 15"><path d="M3 4.800H12M6 4.800V3.300H9V4.800" fill="none" stroke="#ececec" stroke-width="1.200"/><path d="M3.800 6H11.200V12.200H3.800Z" fill="none" stroke="#ececec" stroke-width="1.100"/><path d="M6.300 6.500V11.700M8.700 6.500V11.700" stroke="#ececec" stroke-width="1"/></svg>
<div class="hdr" style="left:828px;top:349px;width:196px;height:13px"></div><div class="t" style="left:901.5px;top:352.2px;font-size:7px;color:#d2d2d2;transform:scaleX(0.945);transform-origin:0 0;">Brush Size</div><svg style="left:1007px;top:353px" width="6" height="6" viewBox="0 0 7 7"><path d="M3 1.500H.600V6.400H5.500V4" fill="none" stroke="#b8b8b8" stroke-width="1"/><path d="M3.300 3.700L6.300 .700M4.300 .600H6.400V2.700" fill="none" stroke="#b8b8b8" stroke-width="1"/></svg><svg style="left:1016.5px;top:353.5px" width="5" height="5" viewBox="0 0 6 6"><path d="M.600 .600L5.400 5.400M5.400 .600L.600 5.400" stroke="#dcdcdc" stroke-width="1.500"/></svg>
<div class="a" style="left:828px;top:362px;width:186px;height:160px;background:#4b4b4b"></div><div class="a" style="left:828px;top:362px;width:186px;height:98px;background:#3e3e3e"></div>
<div class="a" style="left:828.40px;top:362.0px;width:25.600px;height:32px;background:#595959"></div>
<div class="a" style="left:841.35px;top:374.75px;width:0.50px;height:0.50px;border-radius:50%;background:#9a9a9a"></div>
<div class="t" style="left:840.1px;top:387.4px;font-size:6.2px;color:#e6e6e6;transform:scaleX(0.860);transform-origin:0 0;">1</div>
<div class="a" style="left:855.05px;top:362.0px;width:25.600px;height:32px;background:#595959"></div>
<div class="a" style="left:867.95px;top:374.70px;width:0.60px;height:0.60px;border-radius:50%;background:#9a9a9a"></div>
<div class="t" style="left:864.5px;top:387.4px;font-size:6.2px;color:#e6e6e6;transform:scaleX(0.860);transform-origin:0 0;">1.5</div>
<div class="a" style="left:881.70px;top:362.0px;width:25.600px;height:32px;background:#595959"></div>
<div class="a" style="left:894.55px;top:374.65px;width:0.70px;height:0.70px;border-radius:50%;background:#9a9a9a"></div>
<div class="t" style="left:893.4px;top:387.4px;font-size:6.2px;color:#e6e6e6;transform:scaleX(0.860);transform-origin:0 0;">2</div>
<div class="a" style="left:908.35px;top:362.0px;width:25.600px;height:32px;background:#595959"></div>
<div class="a" style="left:921.00px;top:374.45px;width:1.10px;height:1.10px;border-radius:50%;background:#f0f0f0"></div>
<div class="t" style="left:920.1px;top:387.4px;font-size:6.2px;color:#e6e6e6;transform:scaleX(0.860);transform-origin:0 0;">3</div>
<div class="a" style="left:935.00px;top:362.0px;width:25.600px;height:32px;background:#595959"></div>
<div class="a" style="left:947.20px;top:374.00px;width:2.00px;height:2.00px;border-radius:50%;background:#f0f0f0"></div>
<div class="t" style="left:946.7px;top:387.4px;font-size:6.2px;color:#e6e6e6;transform:scaleX(0.860);transform-origin:0 0;">4</div>
<div class="a" style="left:961.65px;top:362.0px;width:25.600px;height:32px;background:#595959"></div>
<div class="a" style="left:973.55px;top:373.70px;width:2.60px;height:2.60px;border-radius:50%;background:#f0f0f0"></div>
<div class="t" style="left:973.4px;top:387.4px;font-size:6.2px;color:#e6e6e6;transform:scaleX(0.860);transform-origin:0 0;">5</div>
<div class="a" style="left:988.30px;top:362.0px;width:25.600px;height:32px;background:#595959"></div>
<div class="a" style="left:999.70px;top:373.20px;width:3.60px;height:3.60px;border-radius:35%;background:#f0f0f0"></div>
<div class="t" style="left:1000px;top:387.4px;font-size:6.2px;color:#e6e6e6;transform:scaleX(0.860);transform-origin:0 0;">7</div>
<div class="a" style="left:828.40px;top:395.0px;width:25.600px;height:32px;background:#595959"></div>
<div class="a" style="left:838.20px;top:405.20px;width:6.80px;height:6.80px;border-radius:50%;background:#f0f0f0"></div>
<div class="t" style="left:838.6px;top:420.4px;font-size:6.2px;color:#e6e6e6;transform:scaleX(0.860);transform-origin:0 0;">12</div>
<div class="a" style="left:855.05px;top:395.0px;width:25.600px;height:32px;background:#595959"></div>
<div class="a" style="left:864.20px;top:404.55px;width:8.10px;height:8.10px;border-radius:50%;background:#f0f0f0"></div>
<div class="t" style="left:865.3px;top:420.4px;font-size:6.2px;color:#e6e6e6;transform:scaleX(0.860);transform-origin:0 0;">15</div>
<div class="a" style="left:881.70px;top:395.0px;width:25.600px;height:32px;background:#595959"></div>
<div class="a" style="left:889.30px;top:403.00px;width:11.20px;height:11.20px;border-radius:50%;background:#f0f0f0"></div>
<div class="t" style="left:891.9px;top:420.4px;font-size:6.2px;color:#e6e6e6;transform:scaleX(0.860);transform-origin:0 0;">20</div>
<div class="a" style="left:908.35px;top:395.0px;width:25.600px;height:32px;background:#595959"></div>
<div class="a" style="left:914.75px;top:401.80px;width:13.60px;height:13.60px;border-radius:50%;background:#f0f0f0"></div>
<div class="t" style="left:918.6px;top:420.4px;font-size:6.2px;color:#e6e6e6;transform:scaleX(0.860);transform-origin:0 0;">25</div>
<div class="a" style="left:935.00px;top:395.0px;width:25.600px;height:32px;background:#595959"></div>
<div class="a" style="left:940.10px;top:400.50px;width:16.20px;height:16.20px;border-radius:50%;background:#f0f0f0"></div>
<div class="t" style="left:945.2px;top:420.4px;font-size:6.2px;color:#e6e6e6;transform:scaleX(0.860);transform-origin:0 0;">30</div>
<div class="a" style="left:961.65px;top:395.0px;width:25.600px;height:32px;background:#595959"></div>
<div class="a" style="left:966.65px;top:400.40px;width:16.40px;height:16.40px;border-radius:50%;background:#f0f0f0"></div>
<div class="t" style="left:971.9px;top:420.4px;font-size:6.2px;color:#e6e6e6;transform:scaleX(0.860);transform-origin:0 0;">40</div>
<div class="a" style="left:988.30px;top:395.0px;width:25.600px;height:32px;background:#595959"></div>
<div class="a" style="left:993.30px;top:400.40px;width:16.40px;height:16.40px;border-radius:50%;background:#f0f0f0"></div>
<div class="t" style="left:998.5px;top:420.4px;font-size:6.2px;color:#e6e6e6;transform:scaleX(0.860);transform-origin:0 0;">50</div>
<div class="a" style="left:828.40px;top:428.0px;width:25.600px;height:32px;background:#595959"></div>
<div class="a" style="left:833.40px;top:433.40px;width:16.40px;height:16.40px;border-radius:50%;background:#f0f0f0"></div>
<div class="t" style="left:837.2px;top:453.4px;font-size:6.2px;color:#e6e6e6;transform:scaleX(0.860);transform-origin:0 0;">100</div>
<div class="a" style="left:855.05px;top:428.0px;width:25.600px;height:32px;background:#595959"></div>
<div class="a" style="left:860.05px;top:433.40px;width:16.40px;height:16.40px;border-radius:50%;background:#f0f0f0"></div>
<div class="t" style="left:863.8px;top:453.4px;font-size:6.2px;color:#e6e6e6;transform:scaleX(0.860);transform-origin:0 0;">150</div>
<div class="a" style="left:881.70px;top:428.0px;width:25.600px;height:32px;background:#595959"></div>
<div class="a" style="left:886.70px;top:433.40px;width:16.40px;height:16.40px;border-radius:50%;background:#f0f0f0"></div>
<div class="t" style="left:890.5px;top:453.4px;font-size:6.2px;color:#e6e6e6;transform:scaleX(0.860);transform-origin:0 0;">200</div>
<div class="a" style="left:908.35px;top:428.0px;width:25.600px;height:32px;background:#595959"></div>
<div class="a" style="left:913.35px;top:433.40px;width:16.40px;height:16.40px;border-radius:50%;background:#f0f0f0"></div>
<div class="t" style="left:917.1px;top:453.4px;font-size:6.2px;color:#e6e6e6;transform:scaleX(0.860);transform-origin:0 0;">300</div>
<div class="a" style="left:935.00px;top:428.0px;width:25.600px;height:32px;background:#595959"></div>
<div class="a" style="left:940.00px;top:433.40px;width:16.40px;height:16.40px;border-radius:50%;background:#f0f0f0"></div>
<div class="t" style="left:943.8px;top:453.4px;font-size:6.2px;color:#e6e6e6;transform:scaleX(0.860);transform-origin:0 0;">400</div>
<div class="a" style="left:961.65px;top:428.0px;width:25.600px;height:32px;background:#595959"></div>
<div class="a" style="left:966.65px;top:433.40px;width:16.40px;height:16.40px;border-radius:50%;background:#f0f0f0"></div>
<div class="t" style="left:970.4px;top:453.4px;font-size:6.2px;color:#e6e6e6;transform:scaleX(0.860);transform-origin:0 0;">500</div>
<div class="a" style="left:988.30px;top:428.0px;width:25.600px;height:32px;background:#595959"></div>
<div class="a" style="left:993.30px;top:433.40px;width:16.40px;height:16.40px;border-radius:50%;background:#f0f0f0"></div>
<div class="t" style="left:997.1px;top:453.4px;font-size:6.2px;color:#e6e6e6;transform:scaleX(0.860);transform-origin:0 0;">700</div>
<div class="a" style="left:1013px;top:362px;width:11px;height:160px;background:#2b2b2b"></div>
<div class="a" style="left:1014px;top:369px;width:9.500px;height:146px;background:#6e6e6e;border-radius:4px"></div>
<svg style="left:1014.500px;top:363px" width="8" height="158" viewBox="0 0 8 158"><path d="M4 .500L7 4H1Z" fill="#9a9a9a"/><path d="M4 157L7 153.500H1Z" fill="#9a9a9a"/></svg>
<div class="a" style="left:829px;top:523px;width:37px;height:12px;background:#3a3a3a"></div>
<div class="t" style="left:831px;top:526px;font-size:6.2px;color:#c4c4c4;transform:scaleX(1.067);transform-origin:0 0;">Brush Size</div>
<div class="t" style="left:869px;top:525px;font-size:6.2px;color:#d8d8d8;transform:scaleX(1.084);transform-origin:0 0;">Reference</div>
<div class="t" style="left:829px;top:496px;font-size:12.5px;color:rgba(150,150,150,.8);transform:scaleX(1.064);transform-origin:0 0;">Activate Windows</div>
<div class="t" style="left:829px;top:513px;font-size:8.8px;color:rgba(150,150,150,.8);transform:scaleX(1.087);transform-origin:0 0;">Go to Settings to activate Windows.</div>
<!-- sec_bottom -->
<div class="a" style="left:124px;top:523px;width:702px;height:13px;background:linear-gradient(#383838,#2b2b2b 85%,#484848 92%,#2a2a2a)"></div>
<div class="a" style="left:393.500px;top:525px;width:206px;height:10px;background:#6c6c6c;border-radius:4px"></div>
<svg style="left:126px;top:526px" width="5" height="7" viewBox="0 0 5 7"><path d="M.500 3.500L4.500 .500V6.500Z" fill="#9a9a9a"/></svg>
<svg style="left:819px;top:526px" width="5" height="7" viewBox="0 0 5 7"><path d="M4.500 3.500L.500 .500V6.500Z" fill="#9a9a9a"/></svg>
<div class="a" style="left:541px;top:488px;width:269px;height:30px;background:#262626;border:1px solid #8a8a8a"></div>
<div class="t" style="left:560px;top:492.5px;font-size:8.4px;color:#e0e0e0;transform:scaleX(1.058);transform-origin:0 0;">You are not using the latest version of MediBang Paint.</div>
<div class="t" style="left:546px;top:503.5px;font-size:8.4px;color:#e0e0e0;transform:scaleX(1.056);transform-origin:0 0;">Please install the latest version of MediBang Paint found here.</div>
<svg style="left:795px;top:498px" width="9" height="9" viewBox="0 0 9 9"><rect x=".500" y=".500" width="8" height="8" fill="none" stroke="#e0e0e0" stroke-width="1"/><path d="M2.500 2.500L6.500 6.500M6.500 2.500L2.500 6.500" stroke="#e0e0e0" stroke-width="1.200"/></svg>
<div class="a" style="left:0;top:536px;width:1024px;height:12px;background:#252525"></div>
<div class="t" style="left:4px;top:539.3px;font-size:7.6px;color:#d0d0d0;transform:scaleX(1.073);transform-origin:0 0;">1300 * 1200 pixel</div>
<div class="t" style="left:71px;top:539.3px;font-size:7.6px;color:#d0d0d0;">(9.4 * 8.7cm)</div>
<div class="t" style="left:121px;top:539.3px;font-size:7.6px;color:#d0d0d0;">350 dpi</div>
<div class="t" style="left:153px;top:539.3px;font-size:7.6px;color:#d0d0d0;transform:scaleX(0.981);transform-origin:0 0;">33 %</div>
<div class="t" style="left:178px;top:539.3px;font-size:7.6px;color:#d0d0d0;transform:scaleX(0.978);transform-origin:0 0;">( 588, 592 )</div>
<div class="a" style="left:0;top:548px;width:1024px;height:28px;background:linear-gradient(to right,#1d323e,#1e3142 50%,#1c2d48)"></div>
<svg style="left:10.500px;top:557px" width="11.500" height="11.500" viewBox="0 0 13 13"><path d="M0 1.800L5.300 1V6H0ZM6.200 .900L12.500 0V6H6.200ZM0 6.900H5.300V12L0 11.200ZM6.200 6.900H12.500V13L6.200 12.100Z" fill="#fff"/></svg>
<div class="a" style="left:32px;top:549px;width:230px;height:27px;background:#f2f2f2"></div>
<svg style="left:40px;top:556px" width="13" height="13" viewBox="0 0 13 13"><circle cx="7.500" cy="5" r="3.800" fill="none" stroke="#222" stroke-width="1.100"/><path d="M4.800 7.800L1 12" stroke="#222" stroke-width="1.200"/></svg>
<div class="t" style="left:59px;top:557.5px;font-size:10.2px;color:#333;transform:scaleX(0.976);transform-origin:0 0;">Type here to search</div>
<svg style="left:271px;top:556px" width="12" height="12" viewBox="0 0 12 12"><circle cx="6" cy="6" r="4.800" fill="none" stroke="#fff" stroke-width="1.500"/></svg>
<svg style="left:302px;top:556px" width="14" height="12" viewBox="0 0 14 12"><path d="M1.500 .500V11.500M1.500 3H9V9H1.500M9 .500V11.500" fill="none" stroke="#fff" stroke-width="1.200"/><path d="M11.500 3V5M11.500 7V9" stroke="#fff" stroke-width="1.200"/></svg>
<svg style="left:336px;top:555px" width="17" height="14" viewBox="0 0 17 14"><path d="M0 5L8.500 0L17 5V14H0Z" fill="#1f8fe0"/><path d="M0 5L8.500 10L17 5V14H0Z" fill="#4db8f5"/><path d="M0 14L6.500 8.800L8.500 10L10.500 8.800L17 14Z" fill="#2aa0ea"/></svg>
<svg style="left:368px;top:555px" width="16" height="14" viewBox="0 0 16 14"><path d="M0 1.500H6L7.500 3H16V13H0Z" fill="#f0b429"/><path d="M0 4H16V13H0Z" fill="#ffd35c"/><rect x="4" y="9" width="8" height="4" fill="#3d8ed8"/><rect x="6" y="11" width="4" height="2" fill="#ffd35c"/></svg>
<svg style="left:401px;top:554px" width="17" height="17" viewBox="0 0 17 17"><defs><linearGradient id="eg" x1="0" y1="0" x2="1" y2="1"><stop offset="0" stop-color="#35c1a0"/><stop offset=".5" stop-color="#1b9de2"/><stop offset="1" stop-color="#0c59a4"/></linearGradient></defs><circle cx="8.500" cy="8.500" r="8" fill="url(#eg)"/><path d="M3 10C3 6 6.500 4.500 9 4.500C12 4.500 14 6.500 14 8.500C14 10 13 11 11.500 11C10.500 11 9.500 10.500 9.500 9.500C9.500 9 10 8.500 10 8C10 7 9 6.500 8 6.500C6 6.500 5 8.500 5.500 11C6 13.500 8 15 10.500 15.500C6.500 16 3 14 3 10Z" fill="#0f4f94" opacity=".7"/><path d="M1 7C2 3 5.500 1 9 1C13 1 16 4 16 7.500C14.500 5 12 4 9 4C5.500 4 3 6 1 7Z" fill="#5ee08a" opacity=".9"/></svg>
<svg style="left:434px;top:554px" width="17" height="17" viewBox="0 0 17 17"><circle cx="8.500" cy="8.500" r="8" fill="#e33b2e"/><path d="M8.500 8.500L1.600 4.500A8 8 0 0 0 7 16.350Z" fill="#2ba24c"/><path d="M8.500 8.500L7 16.350A8 8 0 0 0 15.400 4.500Z" fill="#fcc31e"/><path d="M8.500 8.500L15.400 4.500A8 8 0 0 0 1.600 4.500Z" fill="#e33b2e"/><circle cx="8.500" cy="8.500" r="3.700" fill="#fff"/><circle cx="8.500" cy="8.500" r="2.900" fill="#3f82ec"/></svg>
<svg style="left:467px;top:554px" width="18" height="17" viewBox="0 0 18 17"><rect x="0" y="0" width="16" height="16" rx="4.500" fill="#fff"/><text x="1.800" y="8.500" font-family="'Liberation Sans',sans-serif" font-weight="bold" font-size="5.500" fill="#1a6fe0">Zalo</text><circle cx="12.500" cy="11.500" r="5" fill="#e02020"/><text x="9.700" y="13.500" font-family="'Liberation Sans',sans-serif" font-weight="bold" font-size="5.500" fill="#fff">5+</text></svg>
<div class="a" style="left:493px;top:548px;width:32px;height:28px;background:#46586a"></div>
<svg style="left:500px;top:553.500px" width="18" height="18" viewBox="0 0 18 18"><rect x="0" y="0" width="18" height="18" rx="3.500" fill="#f4f4f4"/><circle cx="9" cy="9" r="5.600" fill="#2ea866"/><path d="M9 9L9 3.400A5.600 5.600 0 0 0 3.800 11.200Z" fill="#ee5a3c"/><path d="M9 9L3.800 11.200A5.600 5.600 0 0 0 11 14.200Z" fill="#f4c430"/><circle cx="9.200" cy="9.200" r="1.500" fill="#fff" opacity=".7"/></svg>
<div class="a" style="left:396px;top:574.500px;width:28px;height:1.500px;background:#7fb6e6"></div>
<div class="a" style="left:429px;top:574.500px;width:28px;height:1.500px;background:#7fb6e6"></div>
<div class="a" style="left:462px;top:574.500px;width:28px;height:1.500px;background:#7fb6e6"></div>
<div class="a" style="left:493px;top:574.500px;width:32px;height:1.500px;background:#7fb6e6"></div>
<svg style="left:735px;top:555px" width="14" height="14" viewBox="0 0 14 14"><path d="M6 1A6 6 0 1 0 13 9A5 5 0 0 1 6 1Z" fill="#f7c843"/><path d="M2 5.500A2.200 2.200 0 0 1 6 5A1.800 1.800 0 0 1 6.500 8.500H2.500A1.600 1.600 0 0 1 2 5.500Z" fill="#e8e8e8" opacity=".9"/></svg>
<div class="t" style="left:757px;top:557.5px;font-size:9.6px;color:#fff;transform:scaleX(1.030);transform-origin:0 0;">87°F</div>
<div class="t" style="left:782px;top:557.5px;font-size:9.6px;color:#fff;">Mostly clear</div>
<svg style="left:844px;top:559px" width="9" height="6" viewBox="0 0 9 6"><path d="M.500 5.500L4.500 1L8.500 5.500" fill="none" stroke="#fff" stroke-width="1"/></svg>
<svg style="left:859px;top:557px" width="11" height="11" viewBox="0 0 11 11"><rect x="0" y="0" width="11" height="11" rx="1" fill="#f2d9d9"/><path d="M2.500 2.500L5.500 8.500L8.500 2.500" fill="none" stroke="#d42a2a" stroke-width="1.600"/></svg>
<svg style="left:875px;top:559px" width="11" height="7" viewBox="0 0 11 7"><rect x=".500" y=".500" width="9" height="6" fill="none" stroke="#fff" stroke-width="1"/><rect x="1.500" y="1.500" width="3" height="4" fill="#fff"/><rect x="10" y="2" width="1" height="3" fill="#fff"/></svg>
<svg style="left:890px;top:557px" width="12" height="11" viewBox="0 0 12 11"><path d="M.500 4H2.500L5 1.500V9.500L2.500 7H.500Z" fill="none" stroke="#fff" stroke-width=".9"/><path d="M7 3.500A3 3 0 0 1 7 7.500M8.500 2A5 5 0 0 1 8.500 9M10 .700A7 7 0 0 1 10 10.300" fill="none" stroke="#fff" stroke-width=".8"/></svg>
<svg style="left:907px;top:557px" width="11" height="11" viewBox="0 0 11 11"><path d="M1.500 10A8 8 0 0 1 9.500 2M4 10A5.500 5.500 0 0 1 9.500 4.500M6.500 10A3 3 0 0 1 9.500 7" fill="none" stroke="#fff" stroke-width="1"/><circle cx="9" cy="9.500" r=".9" fill="#fff"/></svg>
<div class="t" style="left:925px;top:558.5px;font-size:8px;color:#fff;transform:scaleX(0.865);transform-origin:0 0;">ENG</div>
<div class="t" style="left:952px;top:552px;font-size:8.4px;color:#fff;transform:scaleX(0.895);transform-origin:0 0;">8:42 PM</div>
<div class="t" style="left:948px;top:564px;font-size:8.4px;color:#fff;transform:scaleX(0.963);transform-origin:0 0;">8/15/2021</div>
<svg style="left:996px;top:556px" width="15" height="15" viewBox="0 0 15 15"><path d="M1 1H12V9H4.500L2.500 11V9H1Z" fill="#fff"/><path d="M3 3.500H10M3 5.500H10" stroke="#1b2d3e" stroke-width=".7"/><circle cx="10.500" cy="10.500" r="4" fill="#1b2d3e" stroke="#fff" stroke-width=".9"/><text x="8.800" y="12.800" font-family="'Liberation Sans',sans-serif" font-size="6.500" fill="#fff">3</text></svg>
</div></body></html>
